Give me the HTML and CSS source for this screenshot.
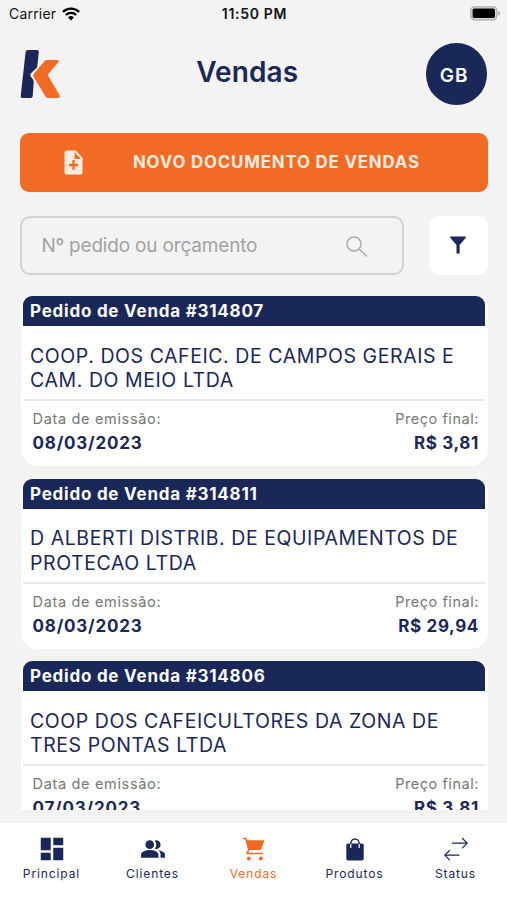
FILE: index.html
```html
<!DOCTYPE html>
<html lang="pt-BR">
<head>
<meta charset="utf-8">
<title>Vendas</title>
<link rel="stylesheet" href="styles.css">
</head>
<body>
<div class="app">
  <div class="status-bar">
    <div class="carrier">Carrier
      <svg width="18" height="14" viewBox="0 0 18 14" fill="none" stroke="#000" stroke-width="2.3"><path d="M.9 4.900a11.500 11.500 0 0 1 16.200 0M3.800 8a7.400 7.400 0 0 1 10.400 0"/><path d="M9 13.600 6.100 10.500a4.100 4.100 0 0 1 5.800 0z" fill="#000" stroke="none"/></svg>
    </div>
    <div class="clock">11:50 PM</div>
    <svg class="battery" width="31" height="15" viewBox="0 0 31 15"><rect x=".8" y=".8" width="26" height="13" rx="3.6" fill="#ddd" stroke="#aaa" stroke-width="1.2"/><rect x="2.6" y="2.6" width="22.4" height="9.4" rx="1.6" fill="#000"/><path d="M28.200 5v4.800q2-.6 2-2.400t-2-2.400z" fill="#aaa"/></svg>
  </div>
  <header class="header">
    <svg class="logo" width="42" height="50" viewBox="0 0 42 50"><path d="M8 1H17Q19 1 18.800 3L17.300 17Q17.200 18.500 16 19.600L11 24.300Q9.600 25.800 10.700 27.400L13 30.600Q13.800 31.600 13.700 33L12.700 47Q12.500 49 10.500 49H2.500Q.5 49 .7 47L5.600 3Q5.900 1 8 1z" fill="#1a2759"/><path d="M27 11h10q2.700.3 1.300 2.300L28.600 24.500q-1 1.300-.2 2.800L39.500 46q1.200 2.500-1.300 3H28q-1.600 0-2.500-1.500L13.700 28q-1.200-1.800.3-3.400L24.500 12q1-1 2.500-1z" fill="#f26b24"/></svg>
    <h1 class="title">Vendas</h1>
    <div class="avatar">GB</div>
  </header>
  <button class="new-doc">
    <svg width="27" height="29" viewBox="0 0 24 24" preserveAspectRatio="none"><path fill="#ffece0" d="M14 2H6c-1.100 0-2 .9-2 2v16c0 1.100.9 2 2 2h12c1.100 0 2-.9 2-2V8l-6-6zm2 13h-3v3h-2v-3H8v-2h3v-3h2v3h3v2zm-3-6V3.500L18.500 9H13z"/></svg>
    <span>NOVO DOCUMENTO DE VENDAS</span>
  </button>
  <div class="search-row">
    <div class="search"><span>Nº pedido ou orçamento</span>
      <svg width="22" height="22" viewBox="0 0 22 22" fill="none" stroke="#aaa" stroke-width="1.500"><circle cx="8" cy="8" r="7"/><path d="m13 13 8 7.500"/></svg>
    </div>
    <div class="filter"><svg width="16" height="18" viewBox="0 0 16 18"><path d="M.2.500h15.600v1.300L9.600 9v8.500H6.500V9L.2 1.800z" fill="#1a2759"/></svg></div>
  </div>
  <main class="list">
    <article class="card">
      <div class="card-head">Pedido de Venda #314807</div>
      <div class="client">COOP. DOS CAFEIC. DE CAMPOS GERAIS E<br>CAM. DO MEIO LTDA</div>
      <div class="labels"><span>Data de emissão:</span><span>Preço final:</span></div>
      <div class="values"><span>08/03/2023</span><span class="price">R$ 3,81</span></div>
    </article>
    <article class="card">
      <div class="card-head">Pedido de Venda #314811</div>
      <div class="client">D ALBERTI DISTRIB. DE EQUIPAMENTOS DE<br>PROTECAO LTDA</div>
      <div class="labels"><span>Data de emissão:</span><span>Preço final:</span></div>
      <div class="values"><span>08/03/2023</span><span class="price">R$ 29,94</span></div>
    </article>
    <article class="card">
      <div class="card-head">Pedido de Venda #314806</div>
      <div class="client">COOP DOS CAFEICULTORES DA ZONA DE<br>TRES PONTAS LTDA</div>
      <div class="labels"><span>Data de emissão:</span><span>Preço final:</span></div>
      <div class="values"><span>07/03/2023</span><span class="price">R$ 3,81</span></div>
    </article>
  </main>
  <nav class="tabs">
    <div class="tab"><svg width="30" height="30" viewBox="0 0 24 24" fill="currentColor"><path d="M3 13h8V3H3v10zm0 8h8v-6H3v6zm10 0h8V11h-8v10zm0-18v6h8V3h-8z"/></svg><span>Principal</span></div>
    <div class="tab"><svg width="26" height="26" viewBox="0 0 24 24" fill="currentColor"><path d="M16.670 13.130C18.040 14.060 19 15.320 19 17v3h4v-3c0-2.180-3.570-3.470-6.330-3.870zM15 12c2.210 0 4-1.790 4-4s-1.790-4-4-4c-.47 0-.91.1-1.330.24C14.500 5.270 15 6.580 15 8s-.5 2.730-1.330 3.760c.42.140.86.240 1.330.24zM9 12c2.210 0 4-1.790 4-4s-1.790-4-4-4-4 1.790-4 4 1.790 4 4 4zm0 1c-2.670 0-8 1.340-8 4v3h16v-3c0-2.660-5.330-4-8-4z"/></svg><span>Clientes</span></div>
    <div class="tab active"><svg width="24" height="24" viewBox="0 0 24 24" fill="currentColor"><path d="M.8.800H4.200L5.400 3.300H22.500L18.900 13H7.300L6.300 15.800H21V17.300H4.500L4.300 15.800 6 12.800 3.100 2.300H.8z"/><circle cx="6.800" cy="21.500" r="1.900"/><circle cx="18.800" cy="21.500" r="1.900"/></svg><span>Vendas</span></div>
    <div class="tab"><svg width="18" height="23" viewBox="0 0 18 23"><path d="M4.800 9V5.500a4.200 4.500 0 0 1 8.400 0V9" fill="none" stroke="currentColor" stroke-width="1.400"/><path d="M2 5.500h14q1.700 0 1.700 1.700v13.600q0 1.700-1.700 1.700H2q-1.700 0-1.700-1.700V7.200q0-1.700 1.700-1.700z" fill="currentColor"/><path d="M4.800 6v4M13.200 6v4" stroke="#fff" stroke-width="1.200"/></svg><span>Produtos</span></div>
    <div class="tab"><svg width="24" height="24" viewBox="0 0 24 24" fill="none" stroke="currentColor" stroke-width="1.200" stroke-linecap="round" stroke-linejoin="round"><path d="M8.500 6.200h14.700M18.500 1.500l4.700 4.700-4.700 4.700M15 18.200H.8M5.500 13.500.8 18.200l4.700 4.700"/></svg><span>Status</span></div>
  </nav>
</div>
</body>
</html>
```

FILE: styles.css
```css
* { box-sizing: border-box; margin: 0; }
body { background: #f3f3f3; font-family: Inter, "Liberation Sans", sans-serif; color: #1a2759; }
svg { display: block; flex: none; }
.app { width: 507px; height: 900px; display: flex; flex-direction: column; overflow: hidden; }
.status-bar { height: 28px; flex: none; display: grid; grid-template-columns: 1fr auto 1fr; align-items: center; padding: 0 6px 1px 9px; color: #111; font-size: 14px; }
.carrier { display: flex; align-items: center; gap: 6px; letter-spacing: .2px; }
.clock { font-weight: 600; letter-spacing: .7px; margin-right: -3px; transform: translateX(-2px); }
.battery { justify-self: end; }
.header { height: 105px; flex: none; display: flex; justify-content: space-between; padding: 15px 19.500px 0 20px; }
.logo { margin-top: 6px; }
.title { font-size: 28px; line-height: 34px; font-weight: 600; letter-spacing: .1px; margin: 12px 0 0 6.500px; }
.avatar { width: 61.500px; height: 61.500px; border-radius: 50%; background: #1a2759; color: #fff; font-size: 19px; font-weight: 600; letter-spacing: 1px; display: flex; align-items: center; justify-content: center; padding-right: 5px; padding-top: 3px; }
.new-doc { height: 58.500px; flex: none; margin: 0 19.500px .5px 20.400px; border: 0; border-radius: 9px; background: #f26b24; color: #ffece0; font: 700 16.800px Inter, sans-serif; letter-spacing: .86px; display: flex; align-items: center; padding: 0 0 0 39.500px; white-space: nowrap; }
.new-doc span { margin: 0 0 0 46px; }
.search-row { flex: none; display: flex; justify-content: space-between; height: 58.500px; margin: 24px 19.500px .5px 20.400px; }
.search { width: 383.500px; border: 2px solid #d3d3d3; border-radius: 10px; display: flex; align-items: center; justify-content: space-between; padding: 0 34px 0 19px; color: #a2a2a2; font-size: 19px; letter-spacing: -.18px; }
.search svg { margin-top: 4px; }
.filter { width: 59px; background: #fff; border-radius: 10px; display: flex; align-items: center; justify-content: center; }
.list { flex: none; height: 514px; margin: 21px 19.500px 0 20.500px; overflow: hidden; display: flex; flex-direction: column; gap: 12.500px; }
.card { flex: none; height: 170px; background: #fff; border-radius: 10px 10px 17px 17px; padding: 0 2.500px; }
.card-head { height: 30px; background: #1a2759; color: #fff; border-radius: 9px 9px 0 0; padding-left: 7px; font-size: 17px; line-height: 30px; font-weight: 700; letter-spacing: .77px; }
.client { height: 75px; padding: 17.500px 0 0 7px; border-bottom: 2px solid #e8e8e8; font-size: 19.500px; line-height: 24.500px; letter-spacing: .57px; white-space: nowrap; font-weight: 400; }
.labels, .values { display: flex; justify-content: space-between; padding: 0 6px 0 9.500px; }
.labels { margin-top: 7px; font-size: 14.500px; line-height: 22px; letter-spacing: .67px; color: #777; }
.labels span:last-child { letter-spacing: .55px; }
.values { margin-top: 0; font-size: 17px; line-height: 26px; font-weight: 700; letter-spacing: .8px; }
.values .price { letter-spacing: .64px; }
.tabs { flex: none; height: 78px; margin-top: 13px; background: #fff; display: grid; grid-template-columns: repeat(5, 101px); justify-content: center; }
.tab { display: grid; grid-template-rows: 34px 16px; justify-items: center; align-items: center; padding-top: 9px; align-content: start; font-size: 12px; line-height: 15px; letter-spacing: .9px; }
.tab span { margin-top: -2px; }
.active { color: #f26b24; }
```
